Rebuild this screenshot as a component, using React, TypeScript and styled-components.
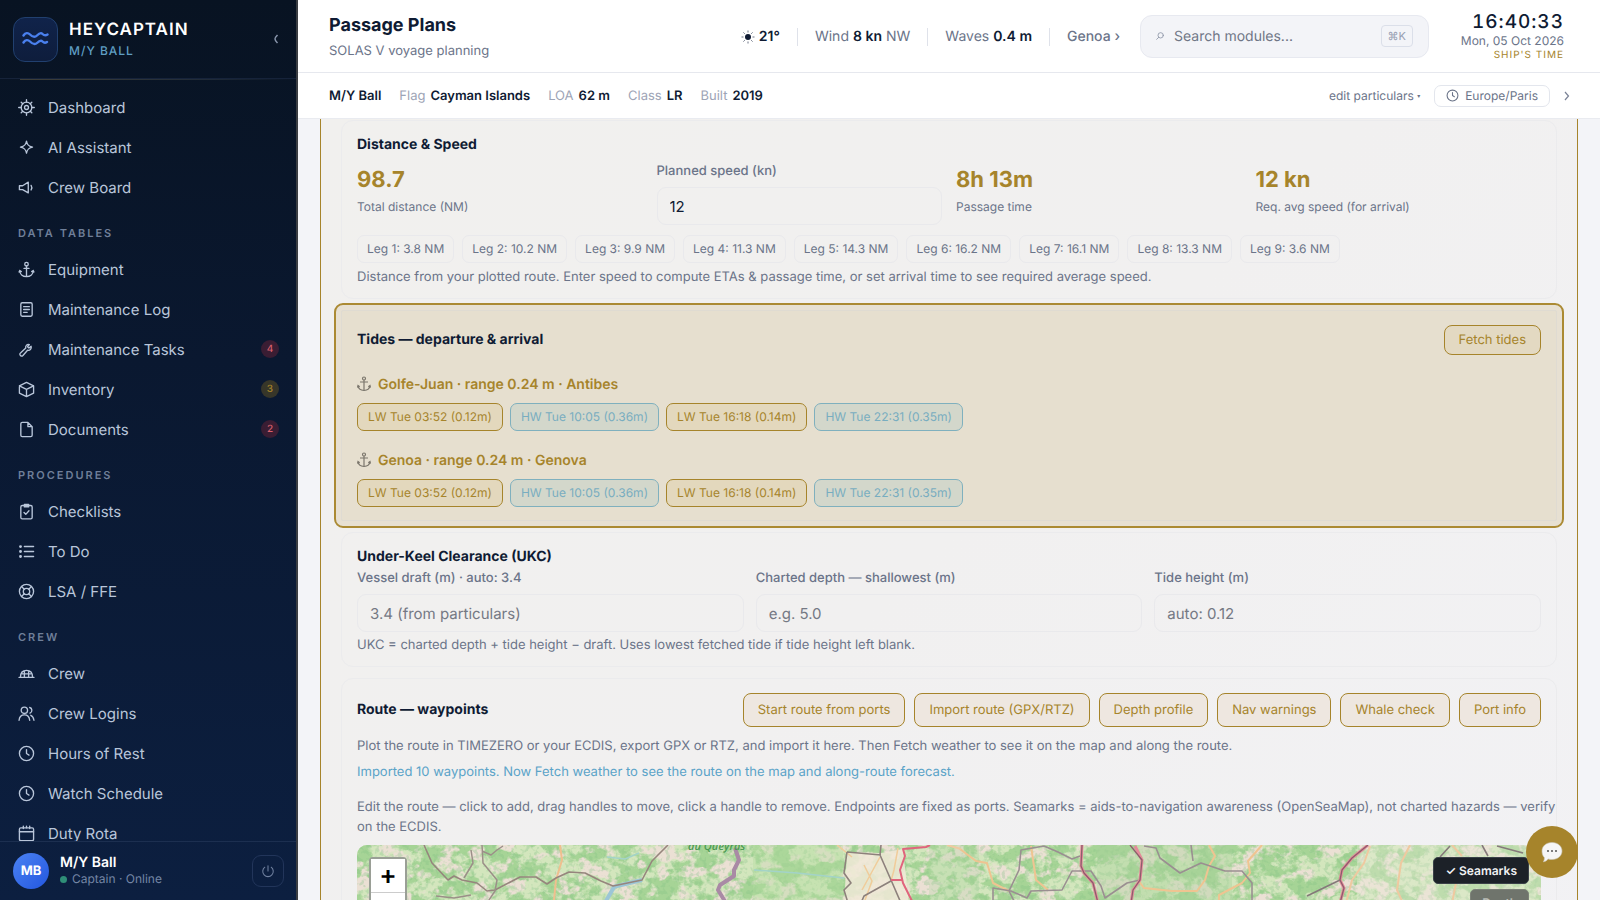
import React from "react";
import styled, { createGlobalStyle, css } from "styled-components";

const gold = "#a6842b";
const ink = "#0f1b33";
const muted = "#6b7489";
const sea = "#5aa3c8";

const Global = createGlobalStyle`
  *, *::before, *::after { box-sizing: border-box; }
  body { margin: 0; background: #f3f4f8; color: ${ink}; font-family: Inter, "Liberation Sans", sans-serif; font-size: 13px; text-rendering: geometricPrecision; -webkit-font-smoothing: antialiased; }
  button, input { font-family: inherit; text-rendering: inherit; }
  h1, h2, p, ul { margin: 0; padding: 0; }
  ul { list-style: none; }
`;

const Shell = styled.div`
  display: flex;
  height: 100vh;
  overflow: hidden;
`;

/* ---------- sidebar ---------- */

const Sidebar = styled.aside`
  flex: none;
  width: 298px;
  display: flex;
  flex-direction: column;
  background: linear-gradient(180deg, #081322 0%, #0a1830 40%, #0c1f40 100%);
  border-right: 2px solid #3a3d42;
`;

const Brand = styled.div`
  display: flex;
  align-items: center;
  gap: 11px;
  height: 79px;
  padding: 0 10px 0 13px;
  border-bottom: 1px solid #16233a;
`;

const LogoTile = styled.div`
  display: grid;
  place-items: center;
  width: 45px;
  height: 45px;
  border-radius: 12px;
  border: 1px solid #21406f;
  background: linear-gradient(180deg, #10234a, #0e1d3c);
`;

const BrandText = styled.div`
  flex: 1;
`;

const BrandName = styled.div`
  color: #fff;
  font-size: 17px;
  line-height: 24px;
  font-weight: 600;
  letter-spacing: 1px;
`;

const BrandSub = styled.div`
  color: #5f9ec3;
  font-size: 12px;
  line-height: 18px;
  font-weight: 500;
  letter-spacing: 1px;
`;

const Collapse = styled.button`
  border: 0;
  background: none;
  color: #8a97ad;
  width: 20px;
  height: 24px;
  padding: 0;
  display: grid;
  place-items: center;
`;

const GoldRule = styled.div`
  height: 1px;
  margin-left: 20px;
  background: linear-gradient(90deg, #3f3f38, #1f2a38 70%, transparent);
`;

const Nav = styled.nav`
  flex: 1;
  min-height: 0;
  overflow: hidden;
  padding-top: 7px;
`;

const NavHeading = styled.h2`
  padding: 18px 18px 8px;
  font-size: 11px;
  line-height: 16px;
  font-weight: 600;
  letter-spacing: 2px;
  color: #6f7f99;
`;

const NavLink = styled.a`
  display: flex;
  align-items: center;
  height: 40px;
  padding: 0 17px 0 18px;
  gap: 13px;
  color: #b9c6da;
  font-size: 15px;
  text-decoration: none;
`;

const NavText = styled.span`
  flex: 1;
`;

const Badge = styled.span<{ $tone: "red" | "gold" }>`
  width: 18px;
  height: 18px;
  border-radius: 9px;
  text-align: center;
  font-size: 10px;
  line-height: 18px;
  font-weight: 500;
  ${(p) =>
    p.$tone === "red"
      ? css`
          background: #3a1d33;
          color: #d9606c;
        `
      : css`
          background: #373629;
          color: #a6842b;
        `}
`;

const UserBar = styled.div`
  display: flex;
  align-items: center;
  gap: 11px;
  height: 59px;
  padding: 0 12px 0 13px;
  border-top: 1px solid #1c2f50;
`;

const Avatar = styled.div`
  width: 36px;
  height: 36px;
  border-radius: 50%;
  display: grid;
  place-items: center;
  background: linear-gradient(135deg, #4b82f2, #2357e0);
  color: #fff;
  font-size: 13px;
  font-weight: 700;
`;

const UserText = styled.div`
  flex: 1;
  font-size: 12px;
  line-height: 16px;
  color: #7486a5;
`;

const UserName = styled.div`
  color: #fff;
  font-size: 14px;
  font-weight: 600;
`;

const Status = styled.div`
  display: flex;
  align-items: center;
  gap: 5px;
  &::before {
    content: "";
    width: 7px;
    height: 7px;
    border-radius: 50%;
    background: #2f8f78;
  }
`;

const PowerButton = styled.button`
  display: grid;
  place-items: center;
  width: 32px;
  height: 32px;
  padding: 0;
  border-radius: 9px;
  border: 1px solid #22355a;
  background: transparent;
  color: #7182a0;
`;

/* ---------- header ---------- */

const Main = styled.main`
  flex: 1;
  min-width: 0;
  display: flex;
  flex-direction: column;
`;

const TopBar = styled.header`
  flex: none;
  display: flex;
  align-items: center;
  height: 73px;
  padding: 0 36px 0 31px;
  background: #fff;
  border-bottom: 1px solid #e6e8ee;
`;

const TitleBlock = styled.div`
  flex: 1;
`;

const PageTitle = styled.h1`
  font-size: 18px;
  line-height: 30px;
  font-weight: 700;
`;

const PageSub = styled.p`
  font-size: 13px;
  line-height: 20px;
  color: ${muted};
`;

const Weather = styled.div`
  display: flex;
  align-items: center;
  padding-top: 2px;
  font-size: 14px;
  color: ${muted};
  margin-right: 20px;
`;

const Reading = styled.span`
  display: flex;
  align-items: center;
  gap: 4px;
  padding: 0 17px;
  line-height: 18px;
  border-right: 1px solid #dfe2ea;
  &:last-child {
    border: 0;
    padding-right: 0;
  }
  b {
    font-weight: 600;
    color: ${ink};
  }
`;

const Place = styled.a`
  color: ${muted};
  font-weight: 500;
  text-decoration: none;
`;

const Search = styled.label`
  display: flex;
  align-items: center;
  gap: 10px;
  width: 289px;
  height: 43px;
  padding: 0 15px;
  border: 1px solid #e7e9f0;
  border-radius: 12px;
  background: #f3f4f8;
  color: #8c94a6;
  input {
    flex: 1;
    min-width: 0;
    border: 0;
    padding: 0;
    background: transparent;
    font-size: 14px;
    outline: 0;
  }
  input::placeholder {
    color: #6f7686;
  }
  kbd {
    font-family: inherit;
    font-size: 11px;
    line-height: 20px;
    padding: 0 6px;
    border: 1px solid #dbdfe9;
    border-radius: 4px;
    color: #98a0b3;
  }
`;

const Clock = styled.div`
  width: 135px;
  text-align: right;
  font-size: 12px;
  line-height: 16px;
  color: ${muted};
`;

const ClockTime = styled.div`
  font-size: 19px;
  line-height: 22px;
  font-weight: 500;
  color: ${ink};
  letter-spacing: 1px;
  font-variant-numeric: tabular-nums;
`;

const ClockZone = styled.div`
  font-size: 10px;
  line-height: 12px;
  letter-spacing: 1px;
  color: ${gold};
`;

const VesselBar = styled.div`
  flex: none;
  display: flex;
  align-items: center;
  gap: 18px;
  height: 46px;
  padding: 0 29px 0 31px;
  background: #fff;
  border-bottom: 1px solid #e9ebf0;
  font-size: 13px;
`;

const Particular = styled.span`
  display: flex;
  gap: 5px;
  color: #9da4b6;
  b {
    color: ${ink};
    font-weight: 600;
  }
`;

const VesselTools = styled.div`
  display: flex;
  align-items: center;
  gap: 14px;
  margin-left: auto;
  color: ${muted};
`;

const EditLink = styled.a`
  font-size: 12px;
  color: ${muted};
  text-decoration: none;
  small {
    font-size: 6px;
    vertical-align: middle;
  }
`;

const ZoneButton = styled.button`
  display: flex;
  align-items: center;
  gap: 6px;
  height: 22px;
  padding: 0 11px;
  border: 1px solid #e3e6ed;
  border-radius: 7px;
  background: #fff;
  color: ${muted};
  font-size: 12px;
`;

/* ---------- content ---------- */

const Scroll = styled.div`
  flex: 1;
  min-height: 0;
  overflow: hidden;
  padding: 0 22px;
`;

const Panel = styled.div`
  display: flex;
  flex-direction: column;
  gap: 11px;
  padding: 1px 20px 20px 20px;
  border: 1px solid ${gold};
  border-width: 0 1px;
  background: linear-gradient(135deg, #f1f0ee 0%, #f1f0f0 45%, #f2f2f5 100%);
`;

const Card = styled.section`
  padding: 14px 15px 11px;
  border: 1px solid #ebebed;
  border-radius: 12px;
`;

const TideCard = styled(Card)`
  padding-bottom: 13px;
  border-color: #dfdbd2;
  background: #e6dfcf;
  box-shadow: 0 0 0 5px #e7e0d2;
  outline: 2px solid #ab8a33;
  outline-offset: 5px;
  border-radius: 2px;
`;

const CardTitle = styled.h2`
  font-size: 14px;
  line-height: 20px;
  font-weight: 700;
`;

const CardHead = styled.div`
  display: flex;
  align-items: center;
  justify-content: space-between;
`;

const Columns = styled.div<{ $count: number; $gap: number }>`
  display: grid;
  grid-template-columns: repeat(${(p) => p.$count}, 1fr);
  gap: ${(p) => p.$gap}px;
  margin-top: ${(p) => (p.$count === 4 ? 7 : 2)}px;
`;

const Stat = styled.div`
  padding-top: 4px;
  font-size: 12px;
  line-height: 18px;
  color: ${muted};
`;

const StatValue = styled.div`
  font-size: 22px;
  line-height: 28px;
  font-weight: 700;
  color: ${gold};
  margin-bottom: 4px;
`;

const Field = styled.label`
  display: block;
  font-size: 13px;
  line-height: 18px;
  font-weight: 500;
  color: ${muted};
`;

const TextInput = styled.input`
  display: block;
  width: 100%;
  height: 38px;
  margin-top: 7px;
  padding: 0 12px;
  border: 1px solid #e9e9ec;
  border-radius: 9px;
  background: transparent;
  font-size: 15px;
  color: ${ink};
  &::placeholder {
    color: #757984;
  }
`;

const ChipRow = styled.ul`
  display: flex;
  flex-wrap: wrap;
  gap: 7px;
`;

const LegRow = styled(ChipRow)`
  margin-top: 10px;
  gap: 8px;
`;

const TideRow = styled(ChipRow)`
  margin-top: 9px;
`;

const Chip = styled.li<{ $kind?: "low" | "high" }>`
  height: 28px;
  padding: 0 ${(p) => (p.$kind ? 10 : 9)}px;
  border: 1px solid #e9e9ec;
  border-radius: 7px;
  font-size: 12px;
  line-height: 26px;
  color: ${muted};
  ${(p) =>
    p.$kind === "low" &&
    css`
      border-color: ${gold};
      background: #e3d8bd;
      color: ${gold};
    `}
  ${(p) =>
    p.$kind === "high" &&
    css`
      border-color: #7fb0be;
      background: #d3d7cb;
      color: #78adc0;
    `}
`;

const Note = styled.p<{ $top: number; $blue?: boolean }>`
  margin-top: ${(p) => p.$top}px;
  font-size: 13px;
  line-height: 20px;
  color: ${(p) => (p.$blue ? sea : muted)};
`;

/* runs across the card's right padding */
const WideNote = styled(Note)`
  margin-right: -15px;
`;

const Port = styled.div`
  display: flex;
  align-items: center;
  gap: 7px;
  margin-top: 19px;
  height: 20px;
  font-size: 14px;
  font-weight: 600;
  color: ${gold};
`;

const Buttons = styled.div`
  display: flex;
  gap: 9px;
`;

const GoldButton = styled.button<{ $small?: boolean }>`
  height: ${(p) => (p.$small ? 30 : 34)}px;
  padding: 0 14px;
  border: 1px solid ${gold};
  border-radius: 8px;
  background: ${(p) => (p.$small ? "#e3d9c2" : "#eee7e0")};
  color: ${gold};
  font-size: 13px;
`;

const MapFrame = styled.div`
  position: relative;
  height: 300px;
  margin-top: 8px;
  border-radius: 10px;
  overflow: hidden;
  background: #d8e6c8;
  svg {
    display: block;
  }
`;

const ZoomControl = styled.div`
  position: absolute;
  left: 12px;
  top: 12px;
  display: flex;
  flex-direction: column;
  border: 2px solid #9a9f96;
  border-radius: 4px;
  background: #ccc;
  gap: 1px;
  button {
    width: 34px;
    height: 33px;
    padding: 0;
    border: 0;
    background: #fff;
    color: #000;
    font-size: 26px;
    font-weight: 600;
    line-height: 33px;
  }
`;

const MapToggles = styled.div`
  position: absolute;
  right: 12px;
  top: 12px;
  display: flex;
  flex-direction: column;
  align-items: flex-end;
  gap: 5px;
`;

const MapToggle = styled.button<{ $on?: boolean }>`
  height: 27px;
  padding: 0 11px;
  border: 1px solid ${(p) => (p.$on ? "#3a4048" : "#7d8279")};
  border-radius: 5px;
  background: ${(p) => (p.$on ? "#1c2128" : "#6f746c")};
  color: ${(p) => (p.$on ? "#f1f2f4" : "#b9bcb6")};
  font-size: 12px;
  font-weight: 600;
`;

const ChatButton = styled.button`
  position: fixed;
  right: 22px;
  bottom: 22px;
  width: 52px;
  height: 52px;
  padding: 0;
  border: 0;
  border-radius: 50%;
  background: ${gold};
  display: grid;
  place-items: center;
`;

/* ---------- icons ---------- */

const Icon = ({ size = 17, sw = 1.9, children }: { size?: number; sw?: number; children: React.ReactNode }) => (
  <svg width={size} height={size} viewBox="0 0 24 24" fill="none" stroke="currentColor" strokeWidth={sw} strokeLinecap="round" strokeLinejoin="round" aria-hidden="true">
    {children}
  </svg>
);

const ClockShape = (
  <>
    <circle cx="12" cy="12" r="10" />
    <path d="M12 6.500V12l3.500 2.200" />
  </>
);

const shapes: Record<string, React.ReactNode> = {
  wheel: (
    <>
      <circle cx="12" cy="12" r="7.500" />
      <circle cx="12" cy="12" r="2.800" />
      <path d="M12 4.500V1M12 19.500V23M4.500 12H1M19.500 12H23M6.700 6.700 4.500 4.500M17.300 6.700l2.200-2.200M6.700 17.300l-2.200 2.200M17.300 17.300l2.200 2.200" />
    </>
  ),
  spark: <path d="M12 3c.9 5.400 2.800 7.300 8.500 8.500-5.700 1.200-7.600 3.100-8.500 8.500-.9-5.400-2.800-7.300-8.500-8.500C9.200 10.300 11.100 8.400 12 3z" />,
  horn: (
    <>
      <path d="M2 9.500v5.500h4.500l8 4.500V4.500l-8 5z" />
      <path d="M18.500 9c1.300 2 1.300 4.500 0 6.500" />
    </>
  ),
  anchor: (
    <>
      <circle cx="12" cy="4.500" r="2.500" />
      <path d="M12 7v15M8.500 10.500h7M2.500 13.500c0 5 4 8.500 9.500 8.500s9.500-3.500 9.500-8.500M2.500 13.500l-1 2M2.500 13.500l2.200 1.500M21.500 13.500l1 2M21.500 13.500 19.300 15" />
    </>
  ),
  log: (
    <>
      <rect x="4" y="2.500" width="16" height="19" rx="2" />
      <path d="M8 8h8M8 12h8M8 16h5" />
    </>
  ),
  wrench: <path d="M18.500 7.500l-3 2.500-2-2 2.500-3c-3-1-6 1.500-5 5L3.500 17a2.200 2.200 0 0 0 0 3.500 2.500 2.500 0 0 0 3.500 0l6.500-7.500c3.500 1 6-2.500 5-5.500z" />,
  box: <path d="M12 2 22 6.800v10.400L12 22 2 17.200V6.800zM2 6.800l10 5 10-5M12 11.800V22" />,
  file: <path d="M14 2H6a2 2 0 0 0-2 2v16a2 2 0 0 0 2 2h12a2 2 0 0 0 2-2V8zM14 2v6h6" />,
  check: (
    <>
      <rect x="4" y="3.500" width="16" height="19" rx="2" />
      <path d="M9 2h6v3.500H9z" fill="currentColor" />
      <path d="m8.500 13.500 2.500 2.500 4.500-5" />
    </>
  ),
  list: (
    <>
      <path d="M9 5h13M9 12h13M9 19h13" />
      <path d="M3.500 5h.1M3.500 12h.1M3.500 19h.1" strokeWidth="4" />
    </>
  ),
  buoy: (
    <>
      <circle cx="12" cy="12" r="10" />
      <circle cx="12" cy="12" r="4.500" />
      <path d="m5 5 3.800 3.800M15.200 8.800 19 5M15.200 15.200 19 19M8.800 15.200 5 19" />
    </>
  ),
  hat: <path d="M1.500 17.500h21M3.500 17c0-6 3.500-9.500 8.500-9.500s8.500 3.500 8.500 9.500M9 17V8.500M15 17V8.500M6 12.500h12" />,
  users: (
    <>
      <circle cx="9" cy="7.500" r="4.500" />
      <path d="M1.500 21.500c.5-5 3-7.500 7.500-7.500s7 2.500 7.500 7.500M16.500 3.500c3.800.8 4.200 6.500.5 8M18 14.500c2.500 1 4 3.500 4.500 7" />
    </>
  ),
  clock: ClockShape,
  calendar: (
    <>
      <rect x="2" y="4" width="20" height="18" rx="2" />
      <path d="M2 9.500h20M7.500 1.500V5M12 1.500V4M16.500 1.500V5" />
    </>
  ),
};

const Sun = () => (
  <svg width="14" height="14" viewBox="0 0 14 14" aria-hidden="true">
    <circle cx="7" cy="7" r="3" fill={ink} />
    <path d="M7 .5v2M7 11.500v2M.5 7h2M11.500 7h2M2.400 2.400l1.400 1.400M10.200 10.200l1.400 1.400M2.400 11.600l1.400-1.400M10.200 3.800l1.400-1.400" stroke="#6f7788" />
  </svg>
);

const PortAnchor = () => (
  <svg width="14" height="16" viewBox="0 0 14 16" fill="none" stroke="#7b766c" strokeWidth="1.200" aria-hidden="true">
    <circle cx="7" cy="2.500" r="1.500" />
    <path d="M7 4v10.500M3 6h8" />
    <path d="M1 9.500c.3 3 2.500 4.800 6 5 3.500-.2 5.700-2 6-5M.5 11.500 1 9.500l1.700 1.200M13.500 11.500l-.5-2-1.700 1.200" />
  </svg>
);

const road = (d: string, stroke: string, w: number) => <path d={d} stroke={stroke} strokeWidth={w} />;

const TerrainMap = () => (
  <svg width="100%" height="300" viewBox="0 0 1184 300" preserveAspectRatio="xMinYMin slice" fill="none" strokeLinejoin="round" aria-label="Route map">
    <defs>
      <filter id="wood" x="0" y="0" width="100%" height="100%" colorInterpolationFilters="sRGB">
        <feTurbulence type="fractalNoise" baseFrequency=".05 .06" numOctaves="5" seed="11" />
        <feColorMatrix values="0 0 0 0 .65  0 0 0 0 .83  0 0 0 0 .59  9 0 0 0 -3.900" />
      </filter>
      <filter id="rock" x="0" y="0" width="100%" height="100%" colorInterpolationFilters="sRGB">
        <feTurbulence type="fractalNoise" baseFrequency=".05 .06" numOctaves="4" seed="4" />
        <feColorMatrix values="0 0 0 0 .92  0 0 0 0 .88  0 0 0 0 .83  0 9 0 0 -4.900" />
      </filter>
      <filter id="speck" x="0" y="0" width="100%" height="100%" colorInterpolationFilters="sRGB">
        <feTurbulence type="fractalNoise" baseFrequency=".22" numOctaves="2" seed="7" />
        <feColorMatrix values="0 0 0 0 .5  0 0 0 0 .75  0 0 0 0 .52  0 0 6 0 -3" />
      </filter>
    </defs>
    <rect width="1184" height="300" fill="#d3e6bd" />
    <rect width="1184" height="300" filter="url(#wood)" />
    <rect width="1184" height="300" filter="url(#rock)" />
    <rect width="1184" height="300" filter="url(#speck)" opacity=".3" />
    <rect x="396" width="90" height="300" fill="#b5dba0" opacity=".4" />
    <path d="M490 7 524 8 546 4 552 60H487z" fill="#f1e9d8" opacity=".85" />
    <rect x="572" width="50" height="300" fill="#add3a0" opacity=".3" />
    <rect x="740" width="135" height="300" fill="#a9d39b" opacity=".4" />
    <rect x="1000" width="184" height="300" fill="#eceadb" opacity=".35" />
    {road("M256 42 285 35M257 42 249 56", "#9cc6d6", 4)}
    {road("M397 25 440 28 487 33M250 12 268 14 282 8", "#a3d3c8", 1.5)}
    {road("M203 0 205 15 199 35 197 55", "#efbf8e", 2)}
    {road("M480 0 495 12M541 3 537 25 534 36M507 20 515 36 508 55M523 12 505 45", "#f0cc9a", 1.5)}
    {road("M603 4 619 16 630 18 636 38 652 46M674 1 679 35 691 45M781 35 787 43 815 46 840 46 848 35 852 21 858 11 852 0M905 0 891 16 893 28 885 38 862 50V60", "#efc491", 2)}
    {road("M1013 1 1007 18 995 35 989 58M1053 0 1044 18 1040 45 1046 58M1095 0 1105 11M1099 38 1095 58M590 0 604 4", "#efc9a0", 2)}
    {road("M67 0 75 18 91 35 97 31 105 35 120 38 130 46 138 45 163 32 179 32 190 39 199 33 212 27 228 28 244 36 256 41 285 35 295 16 311 0", "#96857d", 1.6)}
    {road("M114 5 116 18 107 33M125 0 126 18 140 35 138 46 130 58M125 6 134 10 140 5 146 1M79 51 97 53 114 50", "#9b8f88", 1.500)}
    {road("M378 3 382 15 377 25 377 31 363 40 361 45 369 58", "#a98aa5", 4)}
    {road("M524 0 523 10 534 35 544 58M490 7 524 10M490 7 487 28 494 38 487 45 491 58M534 36 507 51 504 58", "#8d817c", 1.600)}
    {road("M573 0 569 2 546 4 548 11 543 25 546 38 556 58M534 35H546", "#e0647c", 2)}
    {road("M687 1 664 5 662 25 652 46 658 58M687 1 701 7 715 14 723 11M636 58V43L654 46 670 53 674 46 705 45 715 26 734 26 744 41 748 53 770 38 783 35M787 1 799 3 803 13 823 28 844 18 868 26 885 26 895 38V58M834 0 836 16", "#9a8f91", 1.600)}
    {road("M725 0 724 21 727 28 736 38 741 58M778 1 785 15 783 35 776 45 774 58M1011 0 995 13 985 25 983 35 987 43 983 58", "#e58a9a", 3)}
    {road("M725 0 724 21 727 28 736 38 741 58M773 0 785 15 783 35 776 45 774 58M1011 0 995 13 985 25 983 35 987 43 983 58", "#8e5d6c", 1.300)}
    {road("M983 35 950 51M1093 1 1083 12M1125 0 1131 11M1140 1 1166 8", "#85797a", 1.600)}
    <text x="331" y="5" fontFamily="Open Sans" fontSize="11" fontWeight="600" fontStyle="italic" fill="#4b9a52">
      du Queyras
    </text>
  </svg>
);

/* ---------- data ---------- */

type Item = [icon: string, label: string, count?: number, tone?: "red" | "gold"];

const sections: { title?: string; items: Item[] }[] = [
  { items: [["wheel", "Dashboard"], ["spark", "AI Assistant"], ["horn", "Crew Board"]] },
  {
    title: "DATA TABLES",
    items: [
      ["anchor", "Equipment"],
      ["log", "Maintenance Log"],
      ["wrench", "Maintenance Tasks", 4, "red"],
      ["box", "Inventory", 3, "gold"],
      ["file", "Documents", 2, "red"],
    ],
  },
  { title: "PROCEDURES", items: [["check", "Checklists"], ["list", "To Do"], ["buoy", "LSA / FFE"]] },
  {
    title: "CREW",
    items: [["hat", "Crew"], ["users", "Crew Logins"], ["clock", "Hours of Rest"], ["clock", "Watch Schedule"], ["calendar", "Duty Rota"]],
  },
];

const legs = [3.8, 10.2, 9.9, 11.3, 14.3, 16.2, 16.1, 13.3, 3.6];
const tides: ["low" | "high", string][] = [
  ["low", "LW Tue 03:52 (0.12m)"],
  ["high", "HW Tue 10:05 (0.36m)"],
  ["low", "LW Tue 16:18 (0.14m)"],
  ["high", "HW Tue 22:31 (0.35m)"],
];
const ports = ["Golfe-Juan · range 0.24 m · Antibes", "Genoa · range 0.24 m · Genova"];
const particulars = [["Flag", "Cayman Islands"], ["LOA", "62 m"], ["Class", "LR"], ["Built", "2019"]];
const actions = ["Start route from ports", "Import route (GPX/RTZ)", "Depth profile", "Nav warnings", "Whale check", "Port info"];

export default function App() {
  return (
    <Shell>
      <Global />
      <Sidebar>
        <Brand>
          <LogoTile>
            <svg width="27" height="16" viewBox="0 0 27 16" fill="none" stroke="#4a80ee" strokeWidth="2.400" strokeLinecap="round" strokeLinejoin="round" aria-hidden="true">
              <path d="M1.500 4.500C3.500 1.500 6 1.500 8 3.500c2.500 2.500 4.500 3.500 7 1s4-3 5.500-1.500 3 2 5 .5M1.500 11.500c2-3 4.500-3 6.500-1s4.500 4 7 1.500 4-3 5.500-1.500 3 1.500 4.500.5" />
            </svg>
          </LogoTile>
          <BrandText>
            <BrandName>HEYCAPTAIN</BrandName>
            <BrandSub>M/Y BALL</BrandSub>
          </BrandText>
          <Collapse aria-label="Collapse menu">
            <svg width="6" height="10" viewBox="0 0 6 10" fill="none" stroke="currentColor" strokeWidth="1.500" aria-hidden="true">
              <path d="M4.500 1C2.500 3 2 4 2 5s.5 2 2.500 4" />
            </svg>
          </Collapse>
        </Brand>
        <GoldRule />
        <Nav>
          {sections.map((s, i) => (
            <div key={i}>
              {s.title && <NavHeading>{s.title}</NavHeading>}
              {s.items.map(([icon, label, count, tone]) => (
                <NavLink href="#" key={label}>
                  <Icon>{shapes[icon]}</Icon>
                  <NavText>{label}</NavText>
                  {count && tone && <Badge $tone={tone}>{count}</Badge>}
                </NavLink>
              ))}
            </div>
          ))}
        </Nav>
        <UserBar>
          <Avatar>MB</Avatar>
          <UserText>
            <UserName>M/Y Ball</UserName>
            <Status>Captain · Online</Status>
          </UserText>
          <PowerButton aria-label="Log out">
            <Icon size={14} sw={1.8}>
              <path d="M12 3v9M6.500 5.500a9 9 0 1 0 11 0" />
            </Icon>
          </PowerButton>
        </UserBar>
      </Sidebar>

      <Main>
        <TopBar>
          <TitleBlock>
            <PageTitle>Passage Plans</PageTitle>
            <PageSub>SOLAS V voyage planning</PageSub>
          </TitleBlock>
          <Weather>
            <Reading>
              <Sun />
              <b>21°</b>
            </Reading>
            <Reading>
              Wind <b>8 kn</b> NW
            </Reading>
            <Reading>
              Waves <b>0.4 m</b>
            </Reading>
            <Reading>
              <Place href="#">Genoa ›</Place>
            </Reading>
          </Weather>
          <Search>
            <Icon size={8} sw={2.5}>
              <circle cx="14" cy="10" r="8" />
              <path d="m8 16-6 6" />
            </Icon>
            <input type="search" placeholder="Search modules..." aria-label="Search modules" />
            <kbd>⌘K</kbd>
          </Search>
          <Clock>
            <ClockTime>16:40:33</ClockTime>
            <div>Mon, 05 Oct 2026</div>
            <ClockZone>SHIP'S TIME</ClockZone>
          </Clock>
        </TopBar>

        <VesselBar>
          <Particular>
            <b>M/Y Ball</b>
          </Particular>
          {particulars.map(([k, v]) => (
            <Particular key={k}>
              {k} <b>{v}</b>
            </Particular>
          ))}
          <VesselTools>
            <EditLink href="#">
              edit particulars <small>▾</small>
            </EditLink>
            <ZoneButton>
              <Icon size={13} sw={2}>
                {ClockShape}
              </Icon>
              Europe/Paris
            </ZoneButton>
            <svg width="7" height="10" viewBox="0 0 7 10" fill="none" stroke="#7a8296" strokeWidth="1.200" aria-hidden="true">
              <path d="m1 1 3.500 4L1 9" />
            </svg>
          </VesselTools>
        </VesselBar>

        <Scroll>
          <Panel>
            <Card>
              <CardTitle>Distance &amp; Speed</CardTitle>
              <Columns $count={4} $gap={14}>
                <Stat>
                  <StatValue>98.7</StatValue>
                  Total distance (NM)
                </Stat>
                <Field>
                  Planned speed (kn)
                  <TextInput defaultValue="12" />
                </Field>
                <Stat>
                  <StatValue>8h 13m</StatValue>
                  Passage time
                </Stat>
                <Stat>
                  <StatValue>12 kn</StatValue>
                  Req. avg speed (for arrival)
                </Stat>
              </Columns>
              <LegRow>
                {legs.map((nm, i) => (
                  <Chip key={i}>{`Leg ${i + 1}: ${nm} NM`}</Chip>
                ))}
              </LegRow>
              <Note $top={4}>Distance from your plotted route. Enter speed to compute ETAs &amp; passage time, or set arrival time to see required average speed.</Note>
            </Card>

            <TideCard>
              <CardHead>
                <CardTitle>Tides — departure &amp; arrival</CardTitle>
                <GoldButton $small>Fetch tides</GoldButton>
              </CardHead>
              {ports.map((p) => (
                <div key={p}>
                  <Port>
                    <PortAnchor />
                    {p}
                  </Port>
                  <TideRow>
                    {tides.map(([kind, text]) => (
                      <Chip key={text} $kind={kind}>
                        {text}
                      </Chip>
                    ))}
                  </TideRow>
                </div>
              ))}
            </TideCard>

            <Card>
              <CardTitle>Under-Keel Clearance (UKC)</CardTitle>
              <Columns $count={3} $gap={12}>
                <Field>
                  Vessel draft (m) · auto: 3.4
                  <TextInput placeholder="3.4 (from particulars)" />
                </Field>
                <Field>
                  Charted depth — shallowest (m)
                  <TextInput placeholder="e.g. 5.0" />
                </Field>
                <Field>
                  Tide height (m)
                  <TextInput placeholder="auto: 0.12" />
                </Field>
              </Columns>
              <Note $top={3}>UKC = charted depth + tide height − draft. Uses lowest fetched tide if tide height left blank.</Note>
            </Card>

            <Card>
              <CardHead>
                <CardTitle>Route — waypoints</CardTitle>
                <Buttons>
                  {actions.map((a) => (
                    <GoldButton key={a}>{a}</GoldButton>
                  ))}
                </Buttons>
              </CardHead>
              <Note $top={9}>Plot the route in TIMEZERO or your ECDIS, export GPX or RTZ, and import it here. Then Fetch weather to see it on the map and along the route.</Note>
              <Note $top={6} $blue>
                Imported 10 waypoints. Now Fetch weather to see the route on the map and along-route forecast.
              </Note>
              <WideNote $top={15}>
                Edit the route — click to add, drag handles to move, click a handle to remove. Endpoints are fixed as ports. Seamarks = aids-to-navigation awareness (OpenSeaMap), not charted hazards — verify on the ECDIS.
              </WideNote>
              <MapFrame>
                <TerrainMap />
                <ZoomControl>
                  <button aria-label="Zoom in">+</button>
                  <button aria-label="Zoom out">−</button>
                </ZoomControl>
                <MapToggles>
                  <MapToggle $on>✓ Seamarks</MapToggle>
                  <MapToggle>Depth</MapToggle>
                </MapToggles>
              </MapFrame>
            </Card>
          </Panel>
        </Scroll>
      </Main>

      <ChatButton aria-label="Open chat">
        <svg width="24" height="24" viewBox="0 0 24 24" aria-hidden="true">
          <path d="M12 2.500c6 0 10 3.700 10 8.500s-4 8.500-10 8.500c-1.500 0-2.800-.2-4-.6-1 1.700-2.700 2.700-4.700 2.900.9-1.300 1.200-2.700 1-4.300C2.800 16 2 13.700 2 11c0-4.800 4-8.500 10-8.500z" fill="#f6f6f6" stroke="#c9c4b4" strokeWidth=".6" />
          <circle cx="8" cy="11" r="1" fill="#555" />
          <circle cx="12" cy="11" r="1" fill="#555" />
          <circle cx="16" cy="11" r="1" fill="#555" />
        </svg>
      </ChatButton>
    </Shell>
  );
}
